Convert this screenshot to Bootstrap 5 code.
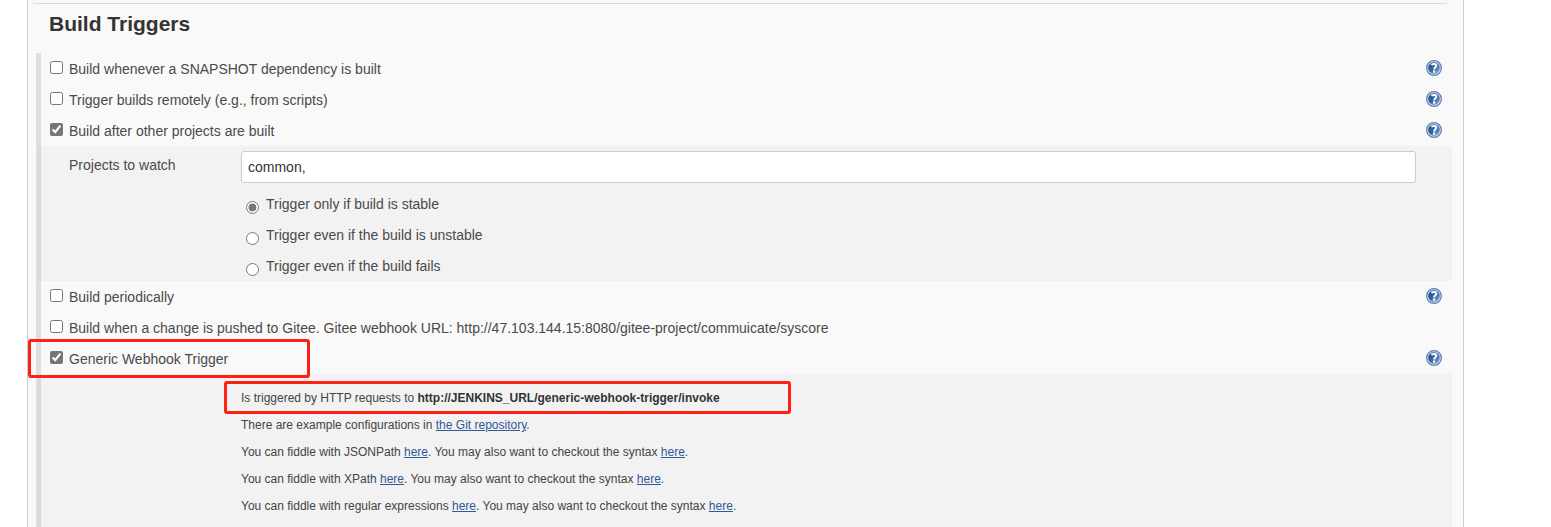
<!DOCTYPE html>
<html lang="en">
<head>
<meta charset="utf-8">
<meta name="viewport" content="width=device-width, initial-scale=1">
<title>Build Triggers</title>
<link href="https://cdn.jsdelivr.net/npm/bootstrap@5.3.0/dist/css/bootstrap.min.css" rel="stylesheet">
<style>
  body { font-family: "Liberation Sans", Arial, sans-serif; font-size: 14px; line-height: 20px; color: #4a4a4a; background: #fff; }
  .config-panel { margin-left: 27px; margin-right: 87px; padding: 3px 11px 0 8px; background: #f9f9f9; border: solid #d0d0d0; border-width: 0 1px; }
  .section-rule { margin: 0 5px 0 -3px; border-top: 1px solid #d8d8d8; opacity: 1; }
  .section-title { font-size: 21px; line-height: 24px; font-weight: 700; color: #333; margin: 8px 0 17px 13px; }
  /* translucent rail down the left edge of the section */
  .trigger-group::before { content: ""; position: absolute; top: 0; bottom: 0; left: 0; width: 5px; background: rgba(0, 0, 0, .1); z-index: 1; }
  .trigger-row { height: 31px; padding: 0 10px 0 14px; }
  .trigger-row input { width: 13px; height: 13px; margin: 0 6px 2px 0; flex: none; accent-color: #767676; }
  .nested { margin-left: 2px; background: #f2f2f2; padding-left: 31px; padding-right: 36px; }
  .watch { padding-top: 5px; }
  .field-label { width: 172px; flex: none; padding-top: 4px; }
  .field-input { height: 32px; padding: 0 6px; font-size: 14px; border: 1px solid #ccc; border-radius: 3px; color: #333; margin-bottom: 5px; }
  .choice { height: 31px; padding-left: 5px; }
  .choice input { width: 13px; height: 13px; margin: 8px 7px 0 0; accent-color: #767676; }
  .help-copy { padding: 16px 0 0 172px; font-size: 12px; line-height: 17px; color: #444; }
  .help-copy p { margin: 0 0 10px; }
  .help-copy a { color: #2f5a93; }
  .help-copy strong { color: #333; }
  .help-btn { width: 16px; height: 16px; margin-bottom: 2px; }
  .help-btn svg { display: block; }
  .callout { position: absolute; border: 3px solid #fd2114; border-radius: 3px; pointer-events: none; z-index: 2; }
  .callout-trigger { left: -8px; top: -4px; width: 282px; height: 39px; }
  .callout-url { left: 186px; top: 7px; width: 567px; height: 33px; }
</style>
</head>
<body>
<svg width="0" height="0" class="position-absolute" aria-hidden="true">
  <defs>
    <linearGradient id="ball" x1="0" y1="0" x2="1" y2="1">
      <stop offset="0" stop-color="#204a87"/><stop offset=".5" stop-color="#3465a4"/><stop offset="1" stop-color="#8db2dd"/>
    </linearGradient>
    <symbol id="help" viewBox="0 0 16 16">
      <circle cx="8" cy="8" r="7.4" fill="#c9d8ec" stroke="#6484b5" stroke-width="1.2"/>
      <circle cx="8" cy="8" r="5.8" fill="url(#ball)"/>
      <path d="M5.6 5.1C6.2 3.5 10.3 3.4 10.3 5.6C10.3 7.4 8.1 7.2 8.1 9.5" fill="none" stroke="#fff" stroke-width="2"/>
      <rect x="7" y="10.5" width="2.2" height="2.2" fill="#fff"/>
    </symbol>
  </defs>
</svg>
<main class="config-panel d-flex flex-column min-vh-100">
  <hr class="section-rule">
  <h2 class="section-title">Build Triggers</h2>
  <form class="trigger-group position-relative d-flex flex-column flex-grow-1">
    <div class="trigger-row d-flex align-items-center">
      <input type="checkbox" id="snapshot"><label for="snapshot">Build whenever a SNAPSHOT dependency is built</label>
      <button type="button" class="help-btn btn p-0 border-0 ms-auto" aria-label="Help"><svg width="16" height="16"><use href="#help"/></svg></button>
    </div>
    <div class="trigger-row d-flex align-items-center">
      <input type="checkbox" id="remote"><label for="remote">Trigger builds remotely (e.g., from scripts)</label>
      <button type="button" class="help-btn btn p-0 border-0 ms-auto" aria-label="Help"><svg width="16" height="16"><use href="#help"/></svg></button>
    </div>
    <div class="trigger-row d-flex align-items-center">
      <input type="checkbox" id="after" checked><label for="after">Build after other projects are built</label>
      <button type="button" class="help-btn btn p-0 border-0 ms-auto" aria-label="Help"><svg width="16" height="16"><use href="#help"/></svg></button>
    </div>
    <div class="nested watch d-flex">
      <label class="field-label" for="projects">Projects to watch</label>
      <div class="flex-grow-1">
        <input type="text" id="projects" class="field-input form-control" value="common,">
        <div class="choice d-flex align-items-center"><input type="radio" name="when" id="stable" checked><label for="stable">Trigger only if build is stable</label></div>
        <div class="choice d-flex align-items-center"><input type="radio" name="when" id="unstable"><label for="unstable">Trigger even if the build is unstable</label></div>
        <div class="choice d-flex align-items-center"><input type="radio" name="when" id="fails"><label for="fails">Trigger even if the build fails</label></div>
      </div>
    </div>
    <div class="trigger-row d-flex align-items-center">
      <input type="checkbox" id="periodic"><label for="periodic">Build periodically</label>
      <button type="button" class="help-btn btn p-0 border-0 ms-auto" aria-label="Help"><svg width="16" height="16"><use href="#help"/></svg></button>
    </div>
    <div class="trigger-row d-flex align-items-center">
      <input type="checkbox" id="gitee"><label for="gitee">Build when a change is pushed to Gitee. Gitee webhook URL: http://47.103.144.15:8080/gitee-project/commuicate/syscore</label>
    </div>
    <div class="trigger-row d-flex align-items-center position-relative">
      <input type="checkbox" id="generic" checked><label for="generic">Generic Webhook Trigger</label>
      <button type="button" class="help-btn btn p-0 border-0 ms-auto" aria-label="Help"><svg width="16" height="16"><use href="#help"/></svg></button>
      <div class="callout callout-trigger"></div>
    </div>
    <div class="nested flex-grow-1 position-relative">
      <div class="callout callout-url"></div>
      <div class="help-copy">
        <p>Is triggered by HTTP requests to <strong>http://JENKINS_URL/generic-webhook-trigger/invoke</strong></p>
        <p>There are example configurations in <a href="#">the Git repository</a>.</p>
        <p>You can fiddle with JSONPath <a href="#">here</a>. You may also want to checkout the syntax <a href="#">here</a>.</p>
        <p>You can fiddle with XPath <a href="#">here</a>. You may also want to checkout the syntax <a href="#">here</a>.</p>
        <p class="mb-0">You can fiddle with regular expressions <a href="#">here</a>. You may also want to checkout the syntax <a href="#">here</a>.</p>
      </div>
    </div>
  </form>
</main>
<script src="https://cdn.jsdelivr.net/npm/bootstrap@5.3.0/dist/js/bootstrap.bundle.min.js"></script>
</body>
</html>
